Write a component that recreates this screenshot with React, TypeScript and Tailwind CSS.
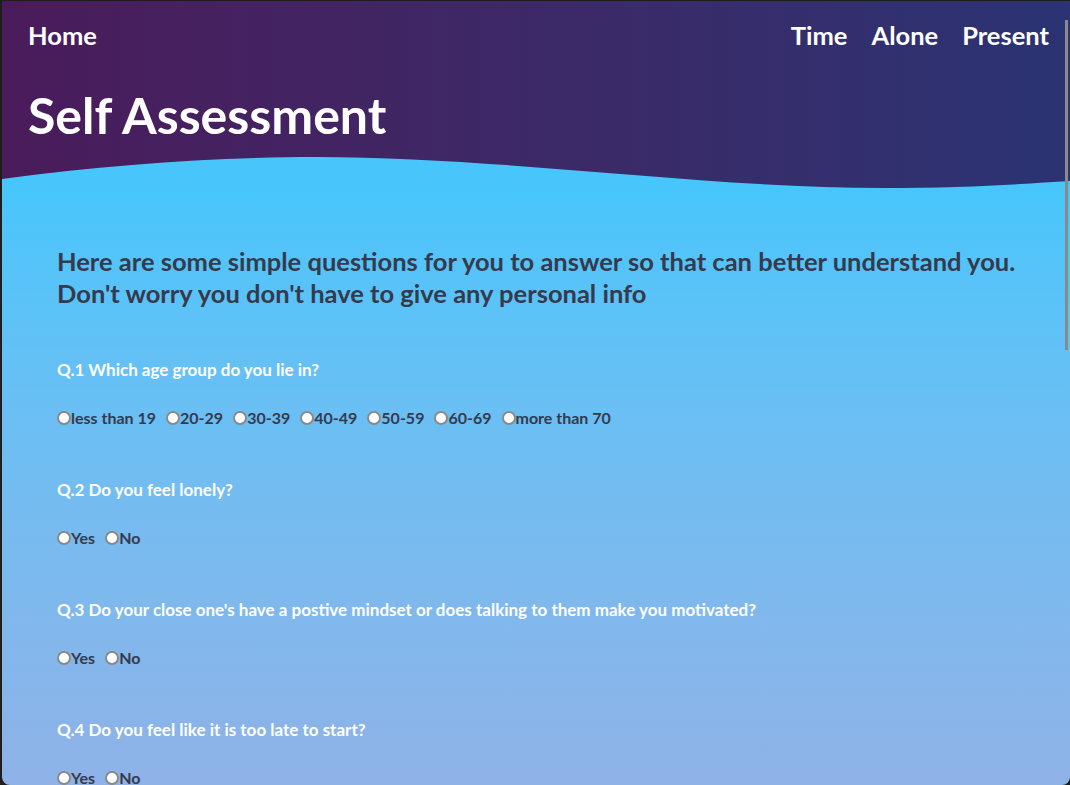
import React from 'react';

const questions = [
  {
    q: 'Q.1 Which age group do you lie in?',
    name: 'age',
    options: ['less than 19', '20-29', '30-39', '40-49', '50-59', '60-69', 'more than 70'],
  },
  { q: 'Q.2 Do you feel lonely?', name: 'lonely', options: ['Yes', 'No'] },
  {
    q: "Q.3 Do your close one's have a postive mindset or does talking to them make you motivated?",
    name: 'closeones',
    options: ['Yes', 'No'],
  },
  { q: 'Q.4 Do you feel like it is too late to start?', name: 'late', options: ['Yes', 'No'] },
];

const Wave = () => (
  <svg
    className="absolute bottom-0 left-0 w-full h-[40px]"
    viewBox="0 0 1068 40"
    preserveAspectRatio="none"
  >
    <path
      d="M0,29 C110,14 220,7 314,7 C500,7 700,38 882,38 C960,38 1020,34 1068,31 L1068,40 L0,40 Z"
      fill="#48c6fb"
    />
  </svg>
);

const App = () => {
  return (
    <div
      className="h-[785px] w-full overflow-hidden bg-[#1e1e1e] pl-[2px] pt-[1px]"
      style={{ fontFamily: 'Lato, "Noto Sans", sans-serif' }}
    >
      <div className="relative h-full overflow-hidden rounded-b-[8px] bg-gradient-to-b from-[#48c6fb] from-[190px] to-[#8fb2e7]">
        <header className="relative h-[189px] bg-gradient-to-r from-[#4a1b5b] to-[#2a3373] text-white">
          <nav className="flex items-center justify-between pl-[26px] pr-[21px] pt-[18px] text-[25.5px] font-bold leading-[32px]">
            <a href="#">Home</a>
            <div className="flex gap-[24px]">
              <a href="#">Time</a>
              <a href="#">Alone</a>
              <a href="#">Present</a>
            </div>
          </nav>
          <h1 className="pl-[26px] pt-[39px] text-[50px] font-bold leading-[50px]">Self Assessment</h1>
          <Wave />
        </header>

        <main className="pl-[55px] pr-[30px] pt-[55px] text-[#353a4d]">
          <h2 className="text-[25.5px] font-bold leading-[32px]">
            Here are some simple questions for you to answer so that can better understand you.
            <br />
            Don't worry you don't have to give any personal info
          </h2>

          <div className="mt-[49px] flex flex-col gap-[48px]">
            {questions.map((item) => (
              <div key={item.name} className="flex flex-col gap-[24px]">
                <p className="text-[17px] font-bold leading-[24px] text-white">{item.q}</p>
                <div className="flex items-center gap-[10px] text-[16px] font-bold leading-[24px]">
                  {item.options.map((opt) => (
                    <label key={opt} className="flex items-center">
                      <input
                        type="radio"
                        name={item.name}
                        className="m-0 box-border size-[14px] shrink-0 appearance-none rounded-full border-2 border-[#8a8a8a] bg-white"
                      />
                      <span>{opt}</span>
                    </label>
                  ))}
                </div>
              </div>
            ))}
          </div>
        </main>

        {/* overlay scrollbar thumb */}
        <div className="absolute right-[2px] top-[19px] h-[330px] w-[3px] bg-[#8a8a8a]" />
      </div>
    </div>
  );
};

export default App;
